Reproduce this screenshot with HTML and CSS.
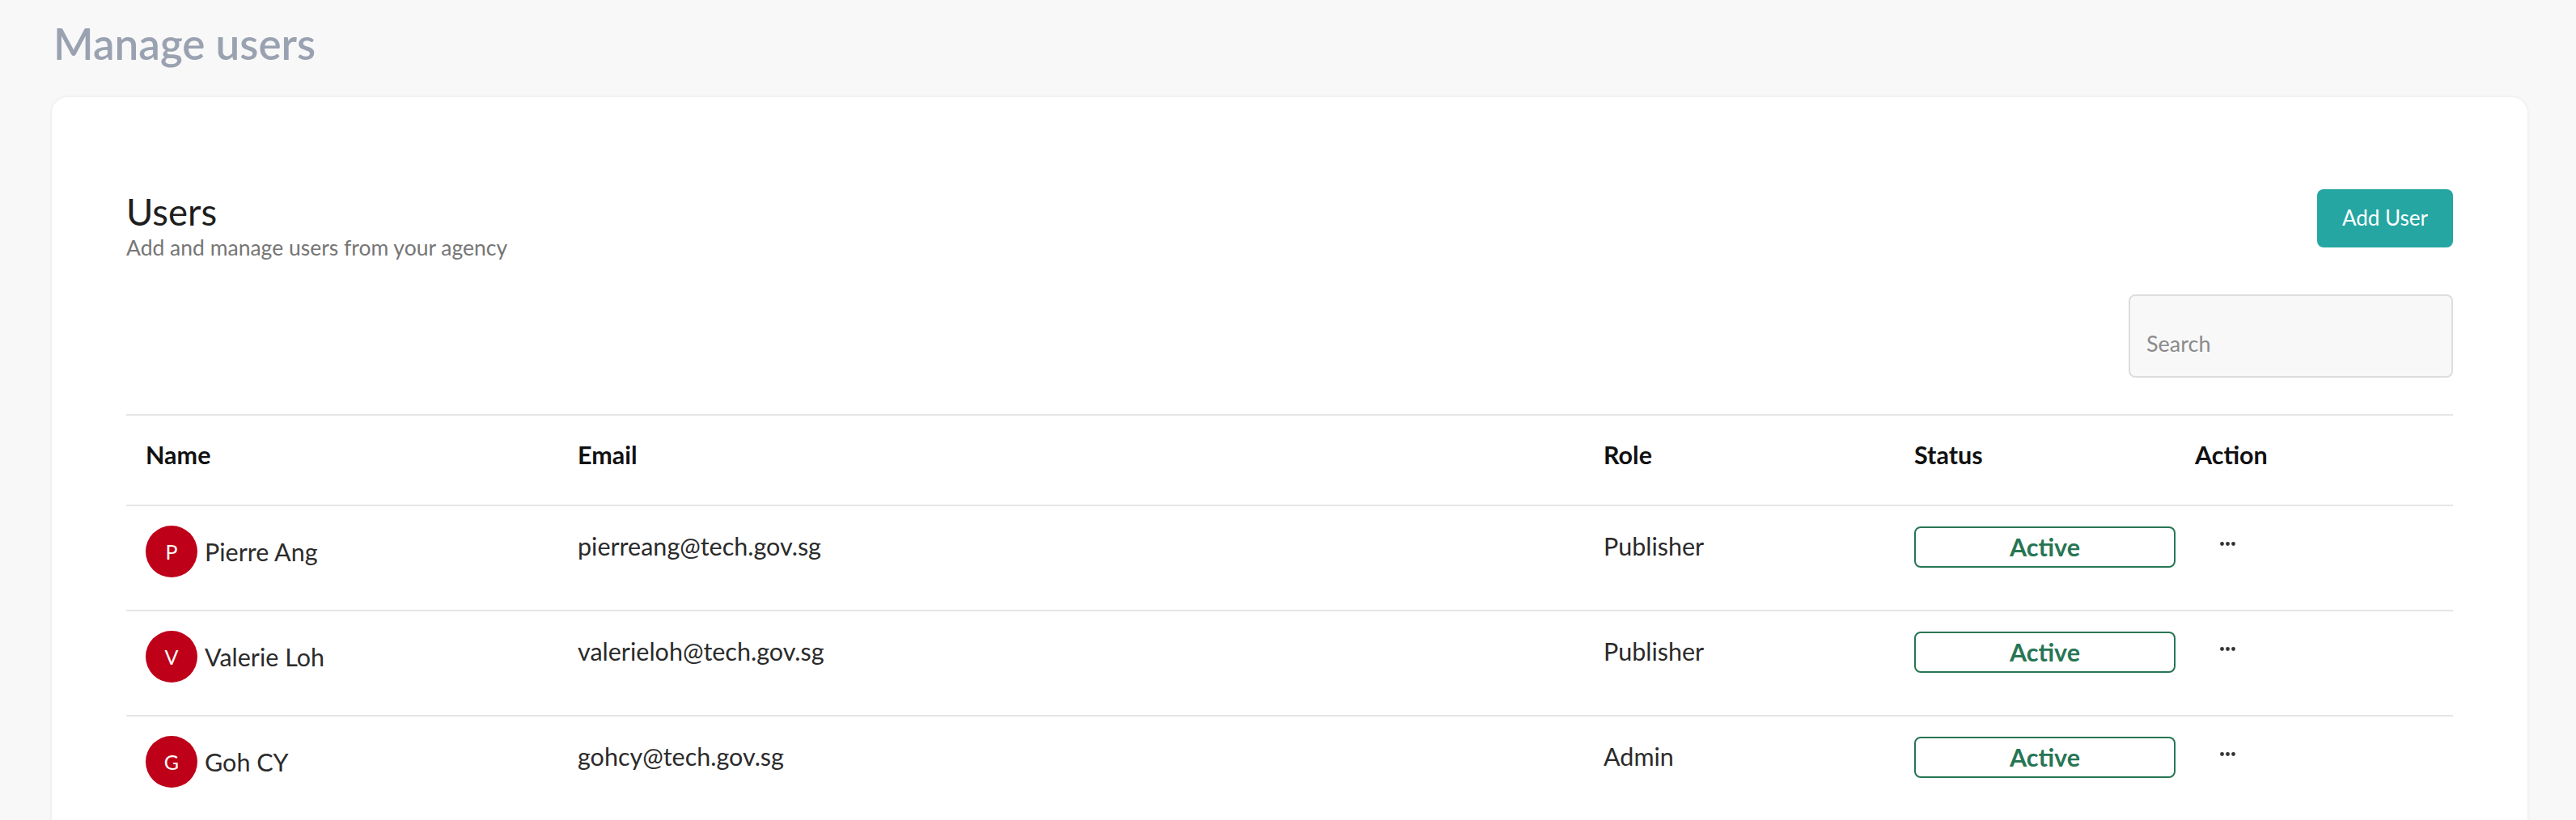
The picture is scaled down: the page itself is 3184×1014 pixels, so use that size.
FILE: index.html
```html
<!DOCTYPE html>
<html lang="en">
<head>
<meta charset="utf-8">
<title>Manage users</title>
<link rel="stylesheet" href="styles.css">
</head>
<body>
<main class="page">
  <h1 class="page-title">Manage users</h1>
  <section class="card">
    <div class="card-header">
      <div class="heading">
        <h2 class="card-title">Users</h2>
        <p class="card-subtitle">Add and manage users from your agency</p>
      </div>
      <button class="btn-primary" type="button">Add User</button>
    </div>
    <div class="search-row">
      <input class="search" type="text" placeholder="Search">
    </div>
    <div class="table">
      <div class="tr thead">
        <div class="th">Name</div>
        <div class="th">Email</div>
        <div class="th">Role</div>
        <div class="th">Status</div>
        <div class="th">Action</div>
      </div>
      <div class="tr row">
        <div class="td name-cell"><span class="avatar">P</span><span class="name">Pierre Ang</span></div>
        <div class="td text-cell">pierreang@tech.gov.sg</div>
        <div class="td text-cell">Publisher</div>
        <div class="td status-cell"><span class="badge">Active</span></div>
        <div class="td action-cell"><button class="more" type="button" aria-label="More actions"><svg width="19" height="5" viewBox="0 0 19 5"><circle cx="2.5" cy="2.5" r="2.4"/><circle cx="9.5" cy="2.5" r="2.4"/><circle cx="16.5" cy="2.5" r="2.4"/></svg></button></div>
      </div>
      <div class="tr row">
        <div class="td name-cell"><span class="avatar">V</span><span class="name">Valerie Loh</span></div>
        <div class="td text-cell">valerieloh@tech.gov.sg</div>
        <div class="td text-cell">Publisher</div>
        <div class="td status-cell"><span class="badge">Active</span></div>
        <div class="td action-cell"><button class="more" type="button" aria-label="More actions"><svg width="19" height="5" viewBox="0 0 19 5"><circle cx="2.5" cy="2.5" r="2.4"/><circle cx="9.5" cy="2.5" r="2.4"/><circle cx="16.5" cy="2.5" r="2.4"/></svg></button></div>
      </div>
      <div class="tr row">
        <div class="td name-cell"><span class="avatar">G</span><span class="name">Goh CY</span></div>
        <div class="td text-cell">gohcy@tech.gov.sg</div>
        <div class="td text-cell">Admin</div>
        <div class="td status-cell"><span class="badge">Active</span></div>
        <div class="td action-cell"><button class="more" type="button" aria-label="More actions"><svg width="19" height="5" viewBox="0 0 19 5"><circle cx="2.5" cy="2.5" r="2.4"/><circle cx="9.5" cy="2.5" r="2.4"/><circle cx="16.5" cy="2.5" r="2.4"/></svg></button></div>
      </div>
    </div>
  </section>
</main>
</body>
</html>
```
FILE: styles.css
```css
* { box-sizing: border-box; }

html, body {
  margin: 0;
  padding: 0;
  background: #f8f8f8;
  font-family: Lato, "Liberation Sans", sans-serif;
  color: #2b2b2b;
}

.page {
  padding: 22px 60px 0 64px;
}

.page-title {
  margin: 0 0 34px 2px;
  font-size: 53px;
  line-height: 64px;
  font-weight: 600;
  color: #9aa2b1;
}

.card {
  background: #ffffff;
  border-radius: 20px;
  box-shadow: 0 0 4px rgba(0, 0, 0, 0.08);
  padding: 114px 92px 60px 92px;
}

.card-header {
  display: flex;
  justify-content: space-between;
  align-items: flex-start;
}

.heading {
  padding-top: 1px;
}

.card-title {
  margin: 0;
  font-size: 45.5px;
  line-height: 1.2;
  font-weight: 400;
  color: #1e1e1e;
}

.card-subtitle {
  margin: 1px 0 0 0;
  font-size: 26.5px;
  line-height: 1.2;
  color: #767676;
}

.btn-primary {
  width: 168px;
  height: 72px;
  border: none;
  border-radius: 8px;
  background: #25a6a2;
  color: #ffffff;
  font-family: inherit;
  font-size: 26px;
  line-height: 1.2;
  padding: 0;
}

.search-row {
  display: flex;
  justify-content: flex-end;
  margin-top: 42px;
}

.search {
  width: 401px;
  height: 103px;
  border: 2px solid #dddddd;
  border-radius: 8px;
  background: #f8f8f8;
  padding: 42px 20px 25px 20px;
  font-family: inherit;
  font-size: 27px;
  line-height: 32px;
  color: #333;
}

.search::placeholder {
  color: #8b8b8b;
}

.table {
  margin-top: 45px;
  border-top: 2px solid #e5e5e5;
}

.tr {
  display: grid;
  grid-template-columns: 534px 1268px 384px 347px 1fr;
  border-bottom: 2px solid #e5e5e5;
  align-items: start;
}

.thead {
  height: 112px;
}

.th {
  padding: 30px 0 0 24px;
  font-size: 30.5px;
  line-height: 1.2;
  font-weight: 700;
  color: #111111;
}

.row {
  height: 130px;
}

.td {
  padding-left: 24px;
  font-size: 30.5px;
  line-height: 1.2;
  color: #2b2b2b;
}

.name-cell {
  display: flex;
  align-items: center;
  gap: 9px;
  padding-top: 24px;
}

.avatar {
  width: 64px;
  height: 64px;
  border-radius: 50%;
  background: #be0019;
  color: #ffffff;
  display: flex;
  align-items: center;
  justify-content: center;
  font-size: 25px;
  flex-shrink: 0;
}

.text-cell {
  padding-top: 31px;
}

.status-cell {
  padding-top: 25px;
}

.badge {
  display: block;
  width: 323px;
  border: 2px solid #277554;
  border-radius: 8px;
  padding: 5px 0 5px 0;
  text-align: center;
  color: #277554;
  font-weight: 700;
}

.action-cell {
  padding-top: 44px;
}

.more {
  display: block;
  margin-left: 31px;
  padding: 0;
  border: none;
  background: none;
  fill: #333333;
  line-height: 0;
}
```
